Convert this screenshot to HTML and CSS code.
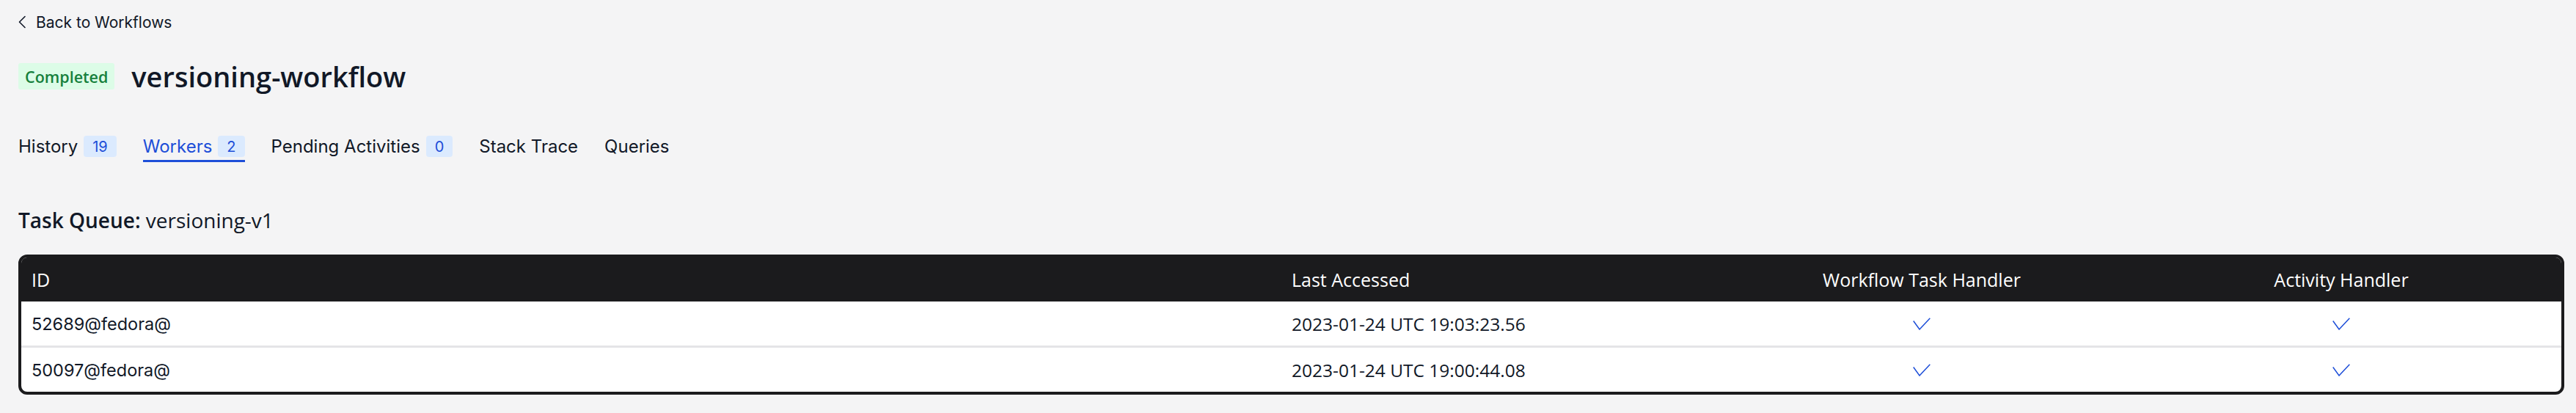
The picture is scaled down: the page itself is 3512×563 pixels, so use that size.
FILE: index.html
```html
<!DOCTYPE html>
<html lang="en">
<head>
<meta charset="utf-8">
<title>versioning-workflow</title>
<link rel="stylesheet" href="styles.css">
</head>
<body>
<main class="page">
  <a class="back" href="#">
    <svg class="back-icon" viewBox="0 0 12 18" width="12" height="18" aria-hidden="true"><polyline points="10,1.5 2.5,9 10,16.5" fill="none" stroke="currentColor" stroke-width="1.6" stroke-linecap="round" stroke-linejoin="round"/></svg>
    <span>Back to Workflows</span>
  </a>

  <header class="wf-header">
    <span class="status">Completed</span>
    <h1 class="wf-title">versioning-workflow</h1>
  </header>

  <nav class="tabs">
    <a class="tab" href="#"><span>History</span><span class="count">19</span></a>
    <a class="tab active" href="#"><span>Workers</span><span class="count">2</span></a>
    <a class="tab" href="#"><span>Pending Activities</span><span class="count">0</span></a>
    <a class="tab" href="#"><span>Stack Trace</span></a>
    <a class="tab" href="#"><span>Queries</span></a>
  </nav>

  <h2 class="queue"><strong>Task Queue:</strong> versioning-v1</h2>

  <div class="table">
    <div class="row head">
      <div class="cell">ID</div>
      <div class="cell">Last Accessed</div>
      <div class="cell center">Workflow Task Handler</div>
      <div class="cell center">Activity Handler</div>
    </div>
    <div class="row">
      <div class="cell id">52689@fedora@</div>
      <div class="cell date">2023-01-24 UTC 19:03:23.56</div>
      <div class="cell center"><svg class="check" viewBox="0 0 24 17" width="24" height="17" aria-hidden="true"><polyline points="0.7,4.5 9,16 23.3,0.7" fill="none" stroke="currentColor" stroke-width="1.5"/></svg></div>
      <div class="cell center"><svg class="check" viewBox="0 0 24 17" width="24" height="17" aria-hidden="true"><polyline points="0.7,4.5 9,16 23.3,0.7" fill="none" stroke="currentColor" stroke-width="1.5"/></svg></div>
    </div>
    <div class="row sep">
      <div class="cell id">50097@fedora@</div>
      <div class="cell date">2023-01-24 UTC 19:00:44.08</div>
      <div class="cell center"><svg class="check" viewBox="0 0 24 17" width="24" height="17" aria-hidden="true"><polyline points="0.7,4.5 9,16 23.3,0.7" fill="none" stroke="currentColor" stroke-width="1.5"/></svg></div>
      <div class="cell center"><svg class="check" viewBox="0 0 24 17" width="24" height="17" aria-hidden="true"><polyline points="0.7,4.5 9,16 23.3,0.7" fill="none" stroke="currentColor" stroke-width="1.5"/></svg></div>
    </div>
  </div>
</main>
</body>
</html>
```

FILE: styles.css
```css
html, body {
  margin: 0;
  padding: 0;
  background: #f4f4f5;
}

.page {
  padding: 15px 16px 0 25px;
  font-family: Inter, "Noto Sans", sans-serif;
  color: #111827;
}

.back {
  display: flex;
  align-items: center;
  gap: 13px;
  height: 30px;
  font-size: 21px;
  color: #111827;
  text-decoration: none;
}

.back-icon {
  margin-left: -1px;
}

.wf-header {
  display: flex;
  align-items: center;
  gap: 23px;
  height: 36px;
  margin-top: 41px;
}

.status {
  display: flex;
  align-items: center;
  height: 36px;
  padding: 0 9px;
  background: #dcfce7;
  color: #16803c;
  border-radius: 3px;
  font-family: "Open Sans", sans-serif;
  font-weight: 600;
  font-size: 21.5px;
}

.wf-title {
  margin: 0;
  font-family: "Open Sans", sans-serif;
  font-weight: 600;
  font-size: 38px;
  line-height: 1;
  color: #111827;
}

.tabs {
  display: flex;
  align-items: flex-start;
  gap: 36px;
  margin-top: 63px;
}

.tab {
  display: flex;
  align-items: center;
  gap: 8px;
  height: 29px;
  padding-bottom: 4px;
  border-bottom: 3px solid transparent;
  font-size: 24px;
  color: #111827;
  text-decoration: none;
}

.tab.active {
  color: #1d4ed8;
  border-bottom-color: #1d4ed8;
}

.count {
  display: flex;
  align-items: center;
  height: 29px;
  padding: 0 12px;
  background: #dbeafe;
  color: #1d4ed8;
  border-radius: 4px;
  font-size: 20px;
}

.queue {
  margin: 59px 0 0;
  height: 40px;
  line-height: 40px;
  font-family: "Open Sans", sans-serif;
  font-weight: 400;
  font-size: 28px;
  color: #111827;
}

.queue strong {
  font-weight: 600;
}

.table {
  margin-top: 27px;
  border: 4px solid #1b1b1d;
  border-radius: 12px;
  overflow: hidden;
  background: #ffffff;
}

.row {
  display: grid;
  grid-template-columns: 1fr 601px 544px 600px;
  height: 60px;
  align-items: center;
}

.row.sep {
  border-top: 3px solid #e4e4e7;
}

.row.head {
  background: #1b1b1d;
  color: #ffffff;
  font-family: "Open Sans", sans-serif;
  font-size: 25px;
}

.cell {
  padding: 0 14px;
  white-space: nowrap;
}

.cell.center {
  display: flex;
  justify-content: center;
  padding: 0;
}

.cell.id {
  font-size: 23.5px;
  color: #111827;
}

.cell.date {
  font-family: "Open Sans", sans-serif;
  font-size: 24.5px;
  color: #111827;
}

.check {
  display: block;
  color: #1d4ed8;
}
```
